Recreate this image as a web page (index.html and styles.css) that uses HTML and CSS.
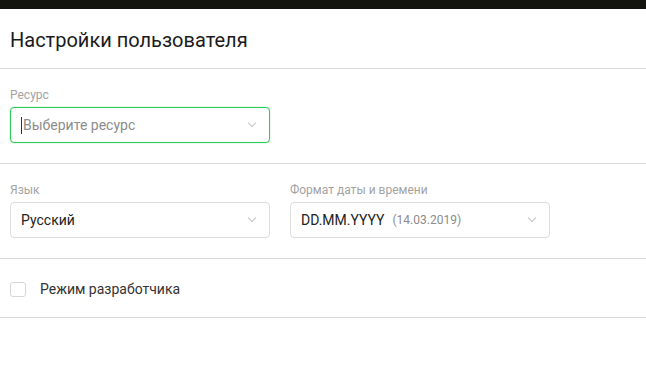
FILE: index.html
```html
<!DOCTYPE html>
<html lang="ru">

<head>
    <meta charset="UTF-8">
    <meta name="viewport" content="width=device-width, initial-scale=1.0">
    <title>Настройки пользователя</title>
    <link rel="stylesheet" href="styles.css">
</head>

<body>
    <div class="topbar"></div>
    <div class="head">Настройки пользователя</div>

    <div class="section">
        <div class="field">
            <div class="label">Ресурс</div>
            <div class="select active">
                <span class="value placeholder"><span class="caret"></span>Выберите ресурс</span>
                <span class="chevron"></span>
            </div>
        </div>
    </div>

    <div class="section row">
        <div class="field">
            <div class="label">Язык</div>
            <div class="select">
                <span class="value">Русский</span>
                <span class="chevron"></span>
            </div>
        </div>
        <div class="field">
            <div class="label">Формат даты и времени</div>
            <div class="select">
                <span class="value">DD.MM.YYYY <span class="hint">(14.03.2019)</span></span>
                <span class="chevron"></span>
            </div>
        </div>
    </div>

    <div class="section checks">
        <label class="check">
            <span class="box"></span>
            <span>Режим разработчика</span>
        </label>
    </div>
</body>

</html>
```

FILE: styles.css
```css
* {
    margin: 0;
    padding: 0;
    box-sizing: border-box;
    font-family: Roboto, "Liberation Sans", Arial, sans-serif;
}

body {
    width: 100%;
    background-color: #fff;
    color: #222;
}

.topbar {
    height: 9px;
    background-color: #131410;
}

.head {
    padding: 19px 10px 16px;
    font-size: 20px;
    line-height: 24px;
    color: #1b1b1b;
    border-bottom: 1px solid #d9d9d9;
}

.section {
    padding: 18px 10px 20px;
    border-bottom: 1px solid #d9d9d9;
}

.row {
    display: flex;
    gap: 20px;
}

.field {
    width: 260px;
    display: flex;
    flex-direction: column;
    gap: 4px;
}

.label {
    font-size: 12px;
    line-height: 16px;
    color: #a3a3a3;
}

.select {
    height: 36px;
    border: 1px solid #dcdcdc;
    border-radius: 4px;
    display: flex;
    align-items: center;
    justify-content: space-between;
    padding: 0 14px 0 10px;
    font-size: 14px;
    color: #222;
}

.select.active {
    border-color: #2bcc55;
    box-shadow: 0 0 1px #2bcc55;
}

.value {
    display: flex;
    align-items: center;
    gap: 8px;
}

.placeholder {
    color: #8c8c8c;
    gap: 0;
}

.caret {
    width: 1px;
    height: 17px;
    background-color: #333;
    margin-right: 1px;
}

.hint {
    font-size: 12px;
    color: #8c8c8c;
}

.chevron {
    width: 6px;
    height: 6px;
    border-right: 1px solid #c4c4c4;
    border-bottom: 1px solid #c4c4c4;
    transform: rotate(45deg);
    margin-top: -4px;
}

.checks {
    padding: 22px 10px 20px;
}

.check {
    display: flex;
    align-items: center;
    gap: 14px;
    font-size: 14px;
    line-height: 16px;
    color: #333;
}

.box {
    width: 16px;
    height: 15px;
    border: 1px solid #d6d6d6;
    border-radius: 3px;
}
```
